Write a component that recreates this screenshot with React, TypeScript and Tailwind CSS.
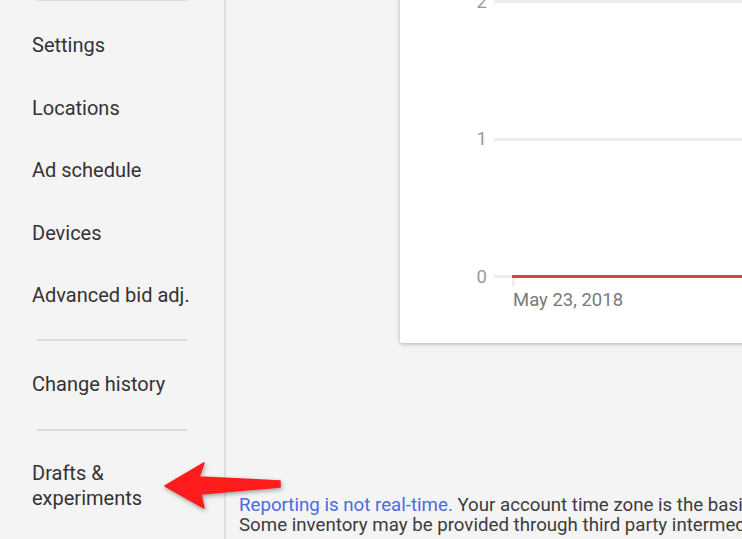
const navItems = ['Settings', 'Locations', 'Ad schedule', 'Devices', 'Advanced bid adj.'];

function Divider({ className = '' }: { className?: string }) {
  return <div className={`mx-[37px] h-[2px] w-[150px] bg-[#dcdcdc] ${className}`} />;
}

function NavItem({ label }: { label: string }) {
  return (
    <div className="flex h-[62.5px] items-center pl-[32px] text-[20px] text-[#333333]">
      {label}
    </div>
  );
}

function Sidebar() {
  return (
    <aside className="flex w-[226px] shrink-0 flex-col border-r-2 border-[#dedede]">
      <Divider className="-mt-px" />
      <div className="mt-[12.75px]">
        {navItems.map((item) => (
          <NavItem key={item} label={item} />
        ))}
      </div>
      <Divider className="mt-[12.75px]" />
      <div className="mt-[12px]">
        <NavItem label="Change history" />
      </div>
      <Divider className="mt-[13.5px]" />
      <div className="mt-[13px] pl-[32px] pt-[16.5px] text-[20px] leading-[25px] text-[#333333]">
        Drafts &amp;
        <br />
        experiments
      </div>
    </aside>
  );
}

function GridRow({ label, zero }: { label: string; zero?: boolean }) {
  return (
    <div className="flex h-[20px] items-center">
      <div className="w-[87px] text-right text-[18.5px] leading-[20px] text-[#9a9a9a]">{label}</div>
      <div className="ml-[7px] flex flex-1 items-center">
        {zero ? (
          <>
            <div className="h-[3px] w-[18px] bg-[#ececec]" />
            <div className="relative h-[3px] flex-1 bg-[#db4437]">
              <div className="absolute left-0 top-[3px] h-[8px] w-[3px] bg-[#ececec]" />
            </div>
          </>
        ) : (
          <div className="h-[3px] flex-1 bg-[#ececec]" />
        )}
      </div>
    </div>
  );
}

function ChartCard() {
  return (
    <div className="-mt-[30px] ml-[174px] w-[400px] shrink-0 rounded-[2px] bg-white pb-[32px] pt-[21.5px] shadow-[0_1px_4px_rgba(0,0,0,0.28)]">
      <div className="flex flex-col gap-[117.5px]">
        <GridRow label="2" />
        <GridRow label="1" />
        <GridRow label="0" zero />
      </div>
      <div className="ml-[113px] mt-[2.5px] text-[18.5px] leading-[22px] text-[#7a7a7a]">May 23, 2018</div>
    </div>
  );
}

function Arrow() {
  return (
    <svg
      className="pointer-events-none absolute left-[160px] top-[455px]"
      width="130"
      height="60"
      viewBox="160 455 130 60"
      style={{ filter: 'drop-shadow(1px 2px 2px rgba(0,0,0,0.35))' }}
    >
      <polygon
        points="165,486 204,463 199,477 280,481 280,487 201,494 204,508"
        fill="#ff1c1c"
        stroke="#ff1c1c"
        strokeWidth="1.5"
        strokeLinejoin="round"
      />
    </svg>
  );
}

export default function App() {
  return (
    <div
      className="relative flex h-[539px] w-[742px] overflow-hidden bg-[#f4f4f4]"
      style={{ fontFamily: 'Roboto, "Liberation Sans", sans-serif' }}
    >
      <Sidebar />
      <main className="flex min-w-0 flex-1 flex-col overflow-hidden">
        <div className="flex">
          <ChartCard />
        </div>
        <div className="mt-[151.5px] whitespace-nowrap pl-[13px] text-[18.7px] leading-[20px] text-[#3c3c3c]">
          <div>
            <span className="text-[#4a6cdf]">Reporting is not real-time.</span> Your account time zone is the basis
            for all reporting data.
          </div>
          <div>Some inventory may be provided through third party intermediaries.</div>
        </div>
      </main>
      <Arrow />
    </div>
  );
}
